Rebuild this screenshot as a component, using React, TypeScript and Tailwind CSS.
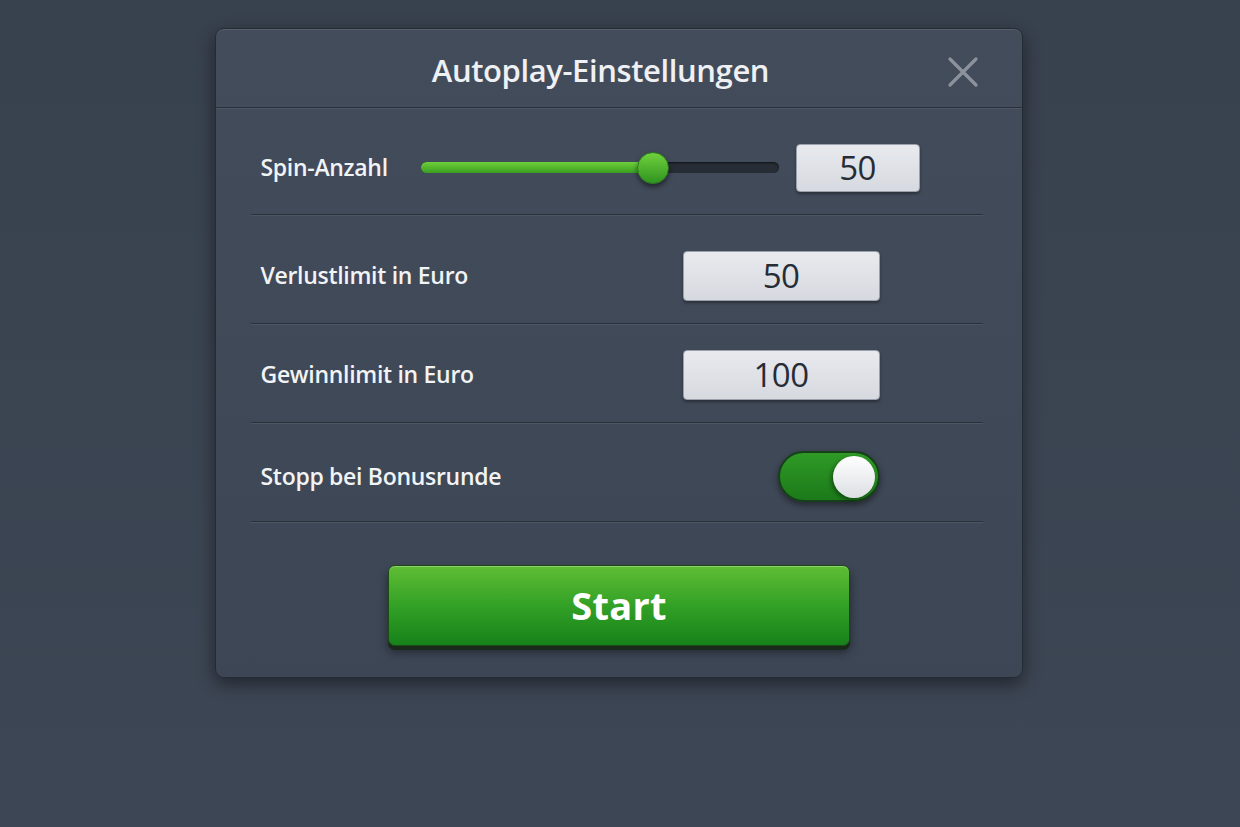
import React, { useState } from 'react';

const font = { fontFamily: '"Open Sans", "Noto Sans", sans-serif' };

const Divider = () => (
  <div className="h-[2px] border-t border-[#29303a] border-b border-b-[#4c5665]" />
);

const NumberBox = ({ value, className }: { value: string; className: string }) => (
  <div
    className={`flex items-center justify-center rounded-[4px] bg-gradient-to-b from-[#e8eaee] to-[#d6d9df] border border-[#9aa1ab] shadow-[0_2px_3px_rgba(0,0,0,0.35)] text-[33px] text-[#262c36] leading-none tracking-[-0.5px] ${className}`}
  >
    {value}
  </div>
);

const labelCls = 'text-[23px] font-semibold text-[#f1f3f5] tracking-[-0.3px]';

const App = () => {
  const [stopOnBonus, setStopOnBonus] = useState(true);
  const spins = 50;
  const pct = 65;

  return (
    <div
      style={font}
      className="min-h-[827px] w-full bg-gradient-to-b from-[#38414e] to-[#3d4654] flex justify-center pt-[28px]"
    >
      <div className="w-[808px] h-[650px] mr-[3px] rounded-[9px] border border-[#252b34] bg-gradient-to-b from-[#434c5b] to-[#3d4655] shadow-[0_6px_18px_rgba(0,0,0,0.45),inset_0_1px_0_rgba(255,255,255,0.12)] flex flex-col">
        {/* header */}
        <div className="relative h-[78px] flex items-center justify-center pr-[36px] pt-[4px]">
          <h1 className="text-[31px] font-semibold text-[#eef0f3] tracking-[-0.4px]">
            Autoplay-Einstellungen
          </h1>
          <button className="absolute right-[43px] top-[27px] w-[32px] h-[32px] flex items-center justify-center">
            <svg width="32" height="32" viewBox="0 0 32 32" fill="none">
              <path d="M3 3 L29 29 M29 3 L3 29" stroke="#8c939d" strokeWidth="3.2" strokeLinecap="round" />
            </svg>
          </button>
        </div>
        <Divider />

        <div className="pl-[35px] pr-[39px] flex flex-col">
          {/* spin count */}
          <div className="h-[105px] flex items-center pl-[10px] pt-[12px]">
            <span className={`w-[160px] ${labelCls}`}>Spin-Anzahl</span>
            <div className="relative w-[358px] h-[11px] rounded-full bg-[#272d35] shadow-[inset_0_1px_2px_rgba(0,0,0,0.6)]">
              <div
                className="absolute left-0 top-0 h-full rounded-full bg-gradient-to-b from-[#6fcf3a] to-[#3a9e22]"
                style={{ width: `${pct}%` }}
              />
              <div
                className="absolute top-1/2 -translate-y-1/2 -translate-x-1/2 w-[32px] h-[32px] rounded-full bg-gradient-to-b from-[#6fd23c] to-[#2f9420] border border-[#2b7a1c] shadow-[0_3px_5px_rgba(0,0,0,0.5)]"
                style={{ left: `${pct}%` }}
              />
            </div>
            <NumberBox value={String(spins)} className="ml-[17px] w-[124px] h-[48px]" />
          </div>
          <Divider />

          {/* loss limit */}
          <div className="h-[107px] flex items-center pl-[10px] pt-[12px]">
            <span className={`flex-1 ${labelCls}`}>Verlustlimit in Euro</span>
            <NumberBox value="50" className="w-[197px] h-[50px] mr-[103px]" />
          </div>
          <Divider />

          {/* win limit */}
          <div className="h-[97px] flex items-center pl-[10px] pt-[2px]">
            <span className={`flex-1 ${labelCls}`}>Gewinnlimit in Euro</span>
            <NumberBox value="100" className="w-[197px] h-[50px] mr-[103px]" />
          </div>
          <Divider />

          {/* bonus stop */}
          <div className="h-[97px] flex items-center pl-[10px] pt-[8px]">
            <span className={`flex-1 ${labelCls}`}>Stopp bei Bonusrunde</span>
            <button
              onClick={() => setStopOnBonus(!stopOnBonus)}
              className={`mr-[103px] w-[102px] h-[51px] rounded-full border-2 border-[#173f1a] flex items-center px-[3px] shadow-[0_3px_6px_rgba(0,0,0,0.45)] ${
                stopOnBonus
                  ? 'justify-end bg-gradient-to-b from-[#2f9a26] to-[#1b7a1a]'
                  : 'justify-start bg-[#2a3038]'
              }`}
            >
              <span className="w-[42px] h-[42px] rounded-full bg-gradient-to-b from-[#ffffff] to-[#dcdfe3] shadow-[-2px_2px_4px_rgba(0,0,0,0.4)]" />
            </button>
          </div>
          <Divider />

          {/* start */}
          <div className="flex justify-center pt-[42px] pl-[5px]">
            <button className="w-[462px] h-[81px] rounded-[7px] border border-[#1c4a17] bg-gradient-to-b from-[#5fbd34] via-[#32a126] to-[#16821a] shadow-[0_4px_0_#1a2a1a,0_6px_10px_rgba(0,0,0,0.45),inset_0_1px_0_rgba(255,255,255,0.3)] text-[38px] font-bold text-white tracking-[0.3px]">
              Start
            </button>
          </div>
        </div>
      </div>
    </div>
  );
};

export default App;
